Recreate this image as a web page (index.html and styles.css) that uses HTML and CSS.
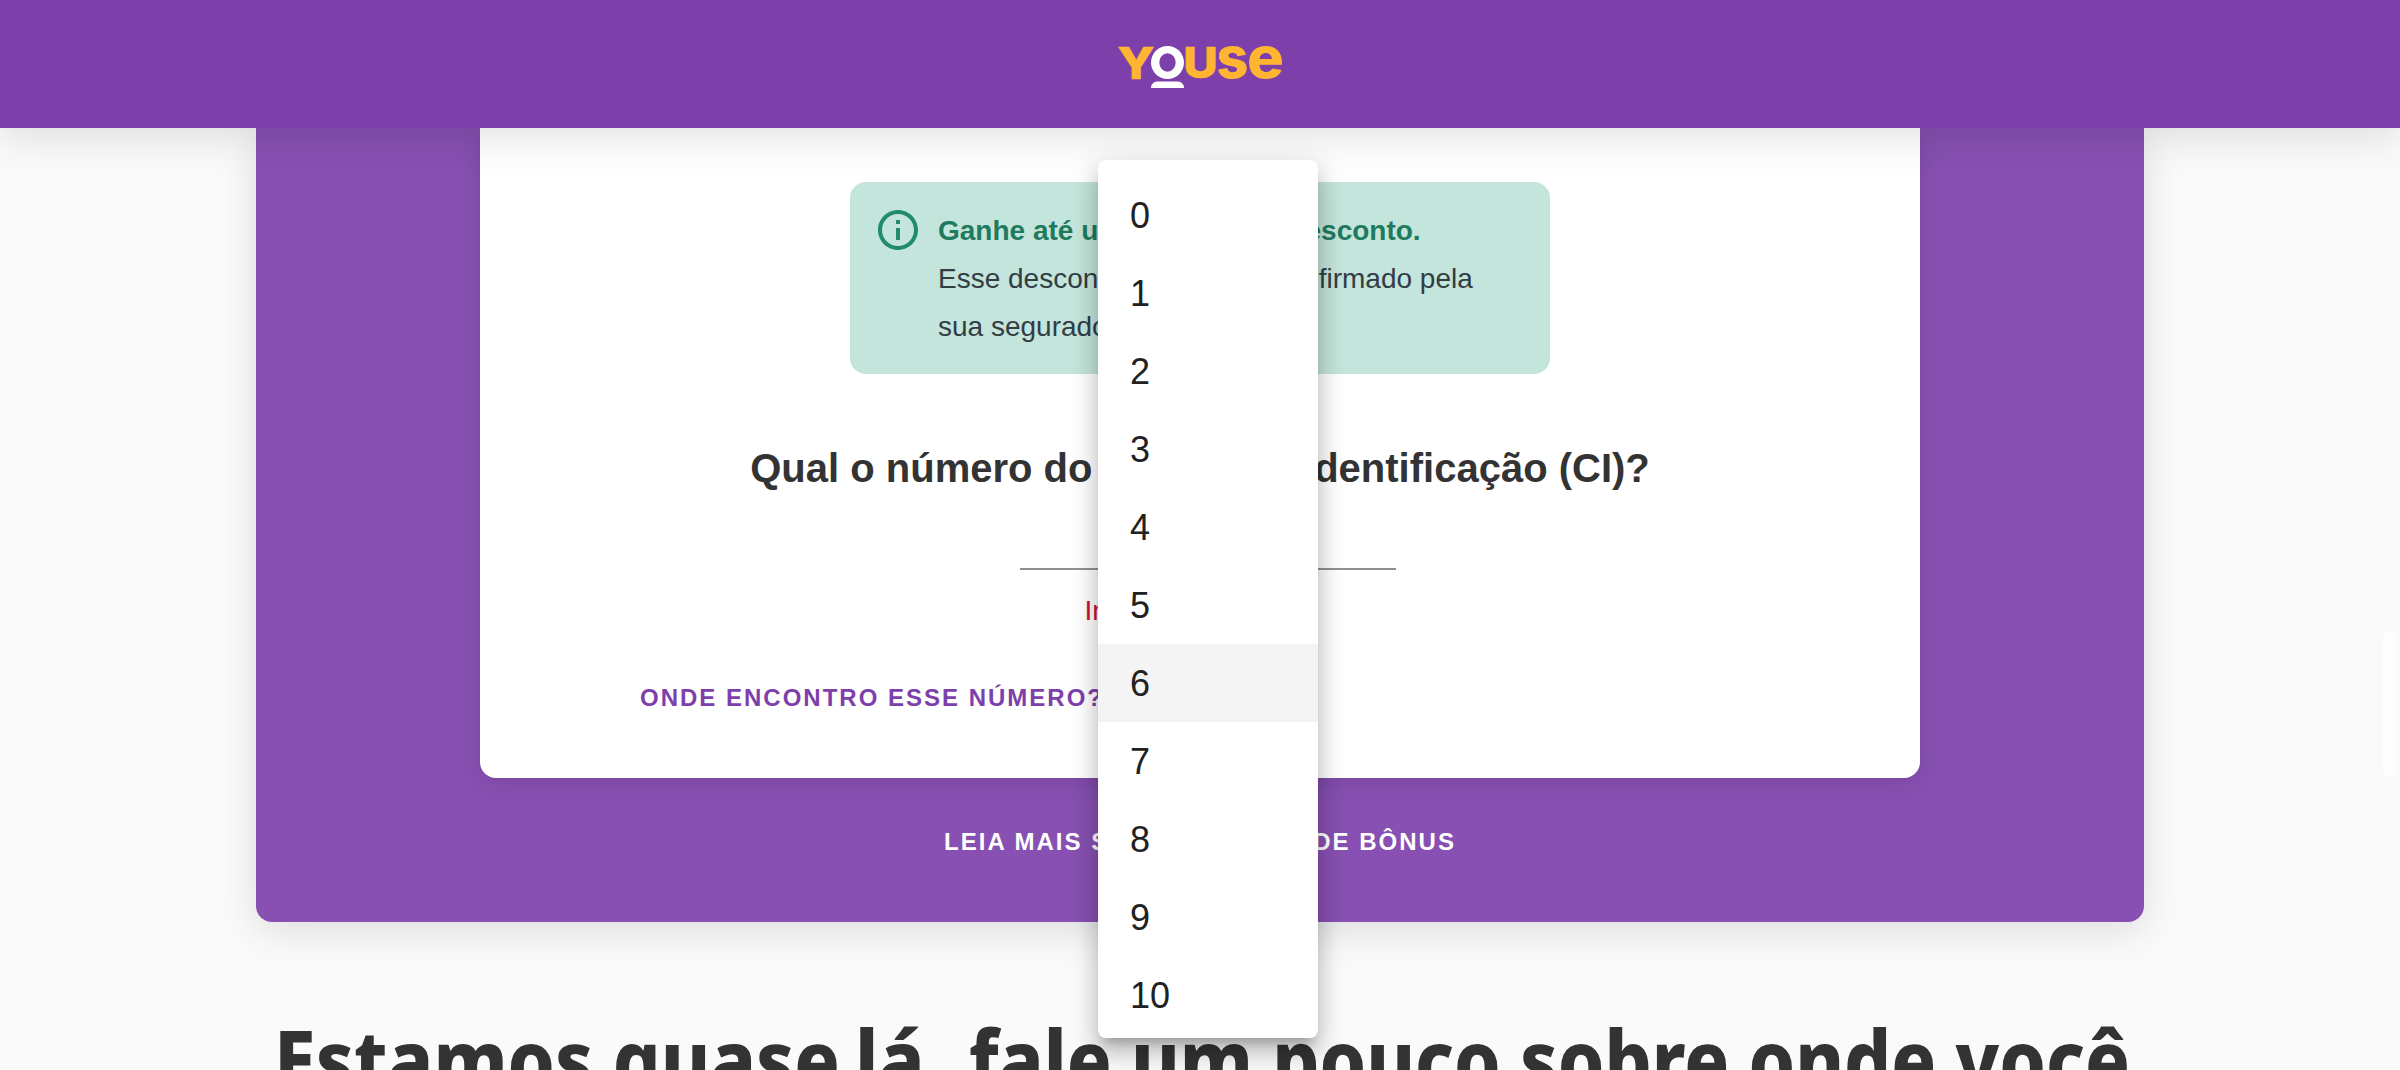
FILE: index.html
```html
<!DOCTYPE html>
<html lang="pt-BR">
<head>
<meta charset="utf-8">
<title>Youse</title>
<link rel="stylesheet" href="styles.css">
</head>
<body>
<header class="topbar">
  <svg class="logo" viewBox="0 0 164 44" role="img" aria-label="Youse">
    <g class="logo-letters">
      <text class="logo-cap" x="-0.500" y="32.700" font-size="43.500" textLength="37" lengthAdjust="spacingAndGlyphs">Y</text>
      <text class="logo-cap" x="65.200" y="32" font-size="43" textLength="34.500" lengthAdjust="spacingAndGlyphs">U</text>
      <text x="98.500" y="32.200" font-size="57" textLength="32" lengthAdjust="spacingAndGlyphs">s</text>
      <text x="129" y="32.200" font-size="57" textLength="37" lengthAdjust="spacingAndGlyphs">e</text>
    </g>
    <path class="logo-mark" fill-rule="evenodd" d="M33 16.500a16.500 16.500 0 1 1 33 0a16.500 16.500 0 1 1-33 0zM41.300 16.500a8.200 9.300 0 1 0 16.400 0a8.200 9.300 0 1 0-16.400 0z"/>
    <path class="logo-mark" d="M33 42v-1q1-5.500 7-5.500h19q6 0 7 5.500v1z"/>
  </svg>
</header>
<main class="page">
  <section class="bonus">
    <div class="card">
      <div class="notice">
        <svg class="notice-icon" viewBox="0 0 24 24"><path d="M11 7h2v2h-2zm0 4h2v6h-2zm1-9C6.480 2 2 6.480 2 12s4.480 10 10 10 10-4.480 10-10S17.520 2 12 2zm0 18c-4.410 0-8-3.590-8-8s3.590-8 8-8 8 3.590 8 8-3.590 8-8 8z"/></svg>
        <div class="notice-text">
          <strong>Ganhe até uma <span class="tier">classe</span> de desconto.</strong>
          <p>Esse desconto <span class="status">deverá</span> ser confirmado pela<br>sua seguradora.</p>
        </div>
      </div>
      <h2 class="question">Qual o número do <span class="term">Código</span> de Identificação (CI)?</h2>
      <div class="field"></div>
      <p class="error">Informe o número</p>
      <a class="help">Onde encontro esse número?</a>
    </div>
    <a class="more">Leia mais sobre classe de bônus</a>
  </section>
  <h1 class="next">
    <svg class="next-line" viewBox="0 0 1856 60">
      <text x="2" y="81" textLength="566" lengthAdjust="spacingAndGlyphs">Estamos quase</text>
      <text x="583" y="81" textLength="92" lengthAdjust="spacingAndGlyphs">lá,</text>
      <text x="697" y="81" textLength="1161" lengthAdjust="spacingAndGlyphs">fale um pouco sobre onde você</text>
    </svg>
  </h1>
</main>
<ul class="menu">
  <li>0</li><li>1</li><li>2</li><li>3</li><li>4</li><li>5</li><li class="selected">6</li><li>7</li><li>8</li><li>9</li><li>10</li>
</ul>
<div class="scroll-thumb"></div>
</body>
</html>
```
FILE: styles.css
```css
* { box-sizing: border-box; margin: 0; padding: 0; }
html, body { height: 1070px; overflow: hidden; }
body {
  position: relative;
  display: flex;
  flex-direction: column;
  background: #fafafa;
  color: #333;
  font-family: "Liberation Sans", Arial, sans-serif;
}
.topbar {
  position: relative;
  z-index: 1;
  flex: none;
  display: flex;
  justify-content: center;
  height: 128px;
  padding-top: 46px;
  background: #7d40ab;
  box-shadow: 0 8px 40px rgba(0, 0, 0, .12);
}
.logo { width: 164px; height: 44px; overflow: visible; }
.logo-letters { fill: #ffb531; font-family: Inter, sans-serif; font-weight: 800; }
.logo-cap { stroke: #ffb531; stroke-width: .6px; }
.logo-mark { fill: #fff; }
.page { display: flex; flex-direction: column; align-items: center; }
.bonus {
  display: flex;
  flex-direction: column;
  align-items: center;
  width: 1888px;
  height: 794px;
  border-radius: 0 0 16px 16px;
  background: #8750b2;
  box-shadow: 0 8px 40px rgba(0, 0, 0, .12);
}
.card {
  display: flex;
  flex-direction: column;
  align-items: center;
  width: 1440px;
  height: 650px;
  padding: 54px 160px 0;
  border-radius: 0 0 16px 16px;
  background: #fff;
  box-shadow: 0 4px 24px rgba(0, 0, 0, .11);
}
.notice {
  display: flex;
  gap: 16px;
  width: 700px;
  height: 192px;
  padding: 24px;
  border-radius: 16px;
  background: #c4e5db;
  font-size: 28px;
  line-height: 48px;
  color: #323d45;
}
.notice-icon { flex: none; width: 48px; height: 48px; fill: #218c6c; }
.notice-text { padding-top: 1px; white-space: nowrap; }
.notice-text strong { color: #1f7a5e; }
.tier { margin-right: 8px; }
.status { margin-right: 4px; }
.question { margin-top: 70px; font-size: 40px; line-height: 48px; white-space: nowrap; }
.term { letter-spacing: -1.2px; }
.field { width: 376px; height: 78px; margin-left: 16px; border-bottom: 2px solid #919191; }
.error { margin-top: 23px; margin-right: 10px; font-size: 28px; line-height: 36px; color: #c8102e; }
.help, .more { font-size: 24px; font-weight: 700; line-height: 32px; letter-spacing: 2px; text-transform: uppercase; white-space: nowrap; }
.help { align-self: flex-start; margin-top: 53px; color: #7d40ab; }
.more { margin-top: 48px; color: #fff; }
.next { display: flex; width: 1856px; margin-top: 88px; }
.next-line {
  width: 1856px;
  height: 60px;
  overflow: visible;
  fill: #333;
  font-family: "Noto Sans", sans-serif;
  font-size: 84px;
  font-weight: 800;
}
.menu {
  position: absolute;
  z-index: 2;
  left: 1098px;
  top: 160px;
  width: 220px;
  height: 878px;
  padding: 16px 0 4px;
  border-radius: 8px;
  background: #fff;
  color: #212121;
  list-style: none;
  font-size: 36px;
  line-height: 80px;
  box-shadow: 0 10px 10px -6px rgba(0, 0, 0, .2), 0 16px 20px 2px rgba(0, 0, 0, .14), 0 6px 28px 4px rgba(0, 0, 0, .12);
}
.menu li { height: 78px; padding: 0 32px; }
.menu .selected { background: #f4f4f4; }
.scroll-thumb {
  position: absolute;
  right: 4px;
  top: 632px;
  width: 14px;
  height: 144px;
  border-radius: 7px;
  background: #fdfdfd;
}
```
